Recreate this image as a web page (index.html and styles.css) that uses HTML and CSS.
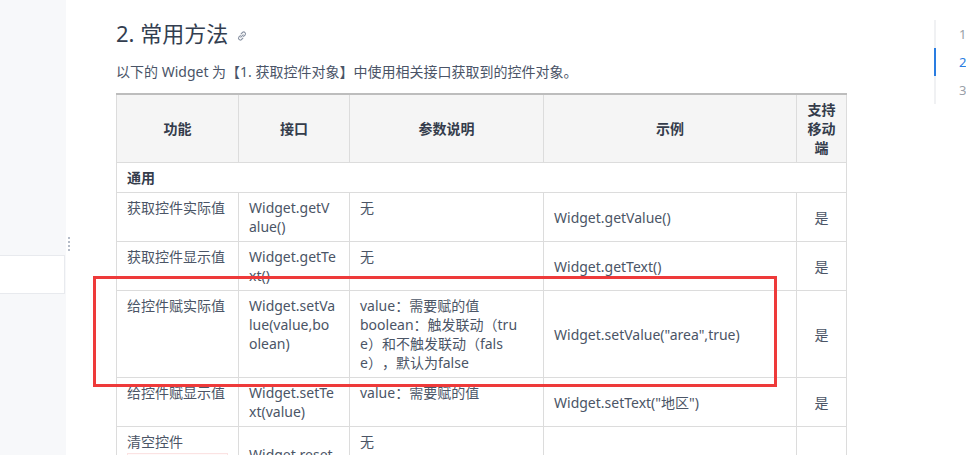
FILE: index.html
```html
<!DOCTYPE html>
<html lang="zh-CN">
<head>
    <meta charset="UTF-8">
    <title>常用方法</title>
    <link rel="stylesheet" href="styles.css">
</head>
<body>
    <aside class="sidebar">
        <div class="sidebar-box"></div>
    </aside>
    <div class="drag-handle">
        <span></span><span></span><span></span><span></span>
    </div>

    <main class="content">
        <h2 class="title">2. 常用方法
            <svg class="anchor" width="12" height="12" viewBox="0 0 12 12">
                <path d="M4.8 7.2 L7.2 4.8" />
                <path d="M4.4 5.6 L2.8 7.2 a1.8 1.8 0 0 0 2.5 2.5 L6.9 8.1" />
                <path d="M7.6 6.4 L9.2 4.8 a1.8 1.8 0 0 0 -2.5 -2.5 L5.1 3.9" />
            </svg>
        </h2>
        <p class="intro">以下的 Widget 为【1. 获取控件对象】中使用相关接口获取到的控件对象。</p>

        <div class="table-wrap">
            <table class="api-table">
                <colgroup>
                    <col class="c1"><col class="c2"><col class="c3"><col class="c4"><col class="c5">
                </colgroup>
                <thead>
                    <tr>
                        <th>功能</th>
                        <th>接口</th>
                        <th>参数说明</th>
                        <th>示例</th>
                        <th>支持移动端</th>
                    </tr>
                </thead>
                <tbody>
                    <tr class="group"><td colspan="5">通用</td></tr>
                    <tr>
                        <td class="top">获取控件实际值</td>
                        <td class="top api">Widget.getValue()</td>
                        <td class="top">无</td>
                        <td>Widget.getValue()</td>
                        <td class="center">是</td>
                    </tr>
                    <tr>
                        <td class="top">获取控件显示值</td>
                        <td class="top api">Widget.getText()</td>
                        <td class="top">无</td>
                        <td>Widget.getText()</td>
                        <td class="center">是</td>
                    </tr>
                    <tr>
                        <td class="top">给控件赋实际值</td>
                        <td class="top api">Widget.setValue(value,boolean)</td>
                        <td class="top">value：需要赋的值<br>boolean：触发联动（true）和不触发联动（false），默认为false</td>
                        <td>Widget.setValue("area",true)</td>
                        <td class="center">是</td>
                    </tr>
                    <tr>
                        <td class="top">给控件赋显示值</td>
                        <td class="top api">Widget.setText(value)</td>
                        <td class="top">value：需要赋的值</td>
                        <td>Widget.setText("地区")</td>
                        <td class="center">是</td>
                    </tr>
                    <tr>
                        <td class="top">清空控件<div class="note"></div></td>
                        <td class="api">Widget.reset()</td>
                        <td class="top">无</td>
                        <td></td>
                        <td class="center"></td>
                    </tr>
                </tbody>
            </table>
            <div class="highlight"></div>
        </div>
    </main>

    <nav class="toc">
        <ul>
            <li>1</li>
            <li class="active">2</li>
            <li>3</li>
        </ul>
    </nav>
</body>
</html>
```

FILE: styles.css
```css
body {
    margin: 0;
    height: 455px;
    overflow: hidden;
    display: flex;
    background-color: #fff;
    font-family: "Noto Sans", "Noto Sans CJK SC", sans-serif;
    color: #4b5566;
    text-spacing-trim: space-all;
}

.sidebar {
    width: 66px;
    flex-shrink: 0;
    background-color: #f7f8fa;
}

.sidebar-box {
    margin-top: 255px;
    height: 37px;
    width: 64px;
    background-color: #fff;
    border: 1px solid #e8eaee;
    border-left: none;
}

.drag-handle {
    position: absolute;
    left: 68px;
    top: 237px;
    display: flex;
    flex-direction: column;
    gap: 2px;
}

.drag-handle span {
    display: block;
    width: 2px;
    height: 2px;
    background-color: #b5bcc8;
}

.content {
    flex: 1;
    padding-left: 50px;
}

.title {
    margin: 18px 0 0;
    font-size: 22px;
    line-height: 30px;
    font-weight: normal;
    color: #333e50;
}

.anchor {
    margin-left: 2px;
    vertical-align: 0;
    fill: none;
    stroke: #8a93a3;
    stroke-width: 1.1;
    stroke-linecap: round;
}

.intro {
    margin: 13px 0 10px;
    font-size: 14px;
    line-height: 22px;
    color: #4a5467;
}

.table-wrap {
    position: relative;
    width: 730px;
}

.api-table {
    width: 730px;
    border-collapse: collapse;
    table-layout: fixed;
    font-size: 14px;
    line-height: 19px;
    border-top: 2px solid #bdbdbd;
}

.api-table col.c1 { width: 122px; }
.api-table col.c2 { width: 111px; }
.api-table col.c3 { width: 194px; }
.api-table col.c4 { width: 253px; }
.api-table col.c5 { width: 50px; }

.api-table th,
.api-table td {
    border: 1px solid #dcdcdc;
    padding: 5px 10px;
    vertical-align: middle;
    word-break: break-all;
}

.api-table td.api {
    padding-right: 12px;
}

.api-table th {
    background-color: #f5f5f5;
    color: #343c4b;
    font-weight: bold;
    text-align: center;
    height: 57px;
}

.api-table th:last-child {
    padding: 5px 8px;
}

.api-table td.top {
    vertical-align: top;
}

.api-table td.center {
    text-align: center;
}

.api-table tr.group td {
    font-weight: bold;
    color: #343c4b;
}

.note {
    height: 40px;
    margin-top: 2px;
    border: 1px solid #fbe3e3;
    background-color: #fffafa;
}

.highlight {
    position: absolute;
    left: -23px;
    top: 183px;
    width: 678px;
    height: 105px;
    border: 3px solid #ee3a3a;
}

.toc {
    width: 32px;
    flex-shrink: 0;
    padding-top: 20px;
}

.toc ul {
    list-style-type: none;
    margin: 0;
    padding: 0;
    border-left: 2px solid #f0f1f3;
}

.toc li {
    height: 28px;
    line-height: 28px;
    padding-left: 23px;
    font-size: 13px;
    color: #9a9fa8;
}

.toc li.active {
    color: #2a7de1;
    margin-left: -2px;
    border-left: 2px solid #2a7de1;
}
```
